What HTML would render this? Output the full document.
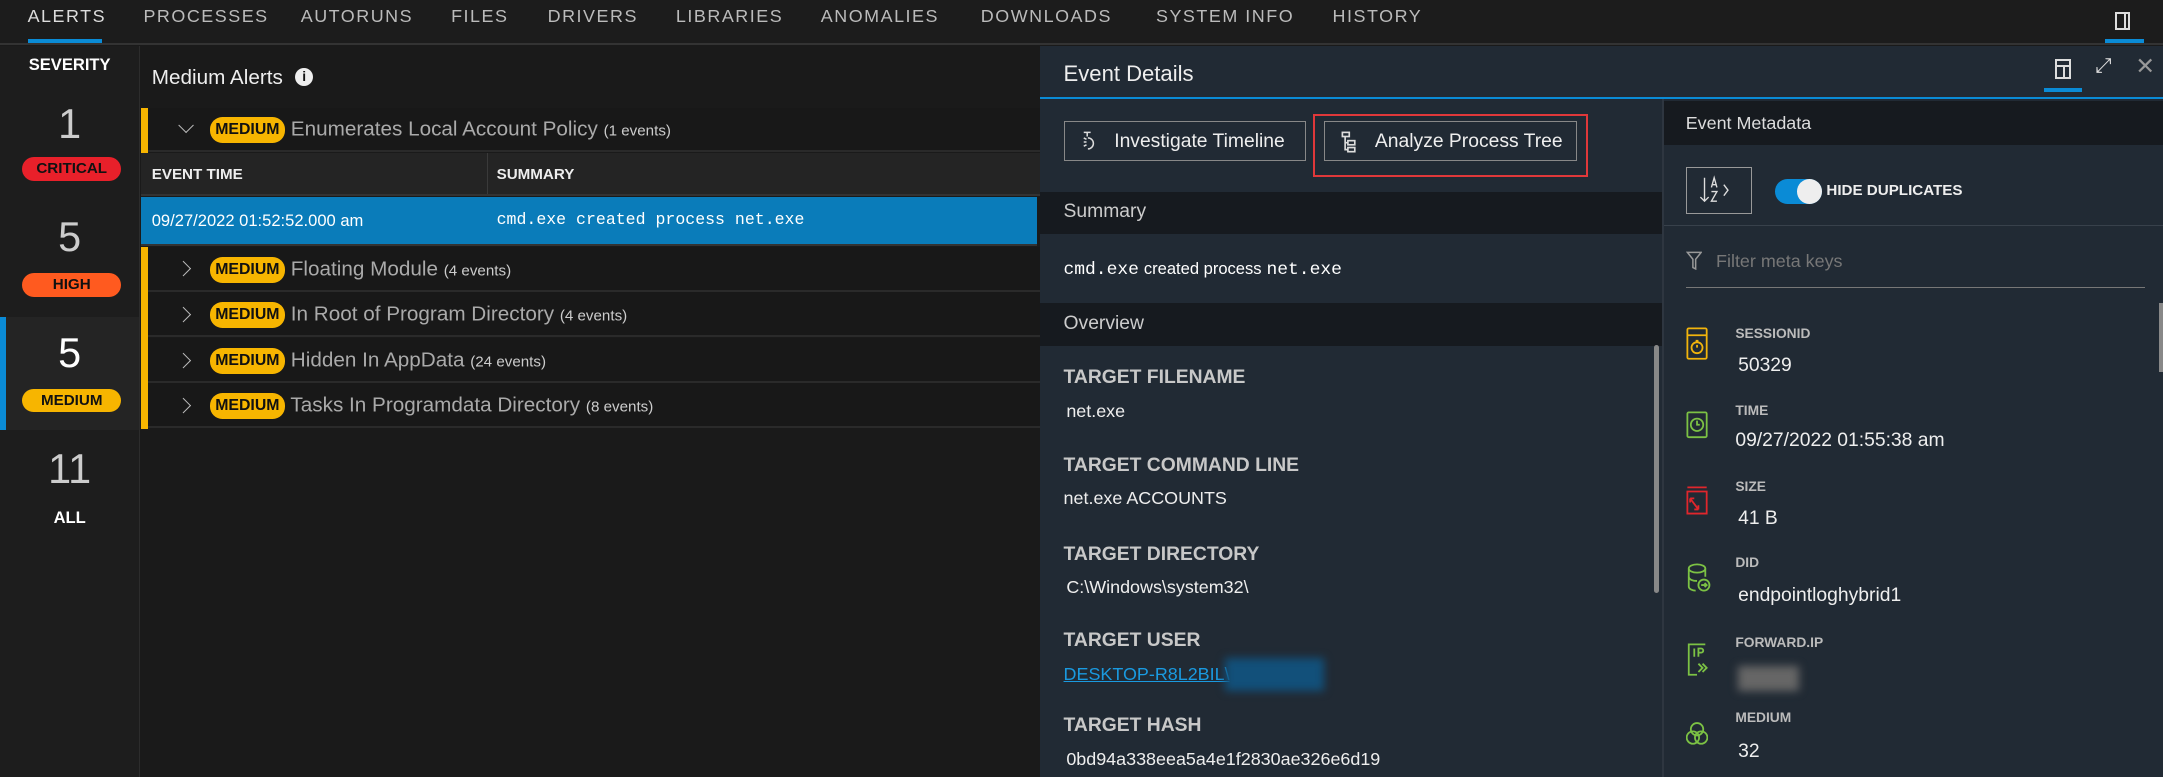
<!DOCTYPE html>
<html><head><meta charset="utf-8"><style>
html,body{margin:0;padding:0;background:#1b1b1b;overflow:hidden}
#w{zoom:1.37946;width:1568px;height:563px;position:relative;font-family:"Liberation Sans",sans-serif;color:#ddd;overflow:hidden;background:#1a1a1a}
.a{position:absolute;white-space:nowrap}
.nav{left:0;top:0;width:1568px;height:31px;background:#1c1c1c;border-bottom:2px solid #333}
.nav span{position:absolute;top:4px;font-size:13px;letter-spacing:1.1px;color:#bbb}
.sev{left:0;top:33px;width:101px;height:530px;background:#1d1d1d;border-right:1px solid #2c2c2c}
.num{font-size:30px;color:#ccc;width:101px;text-align:center;left:0}
.badge{border-radius:9px;font-size:11px;font-weight:bold;text-align:center;height:17px;line-height:17px}
.mb{background:#f7b500;color:#111;border-radius:9px;font-size:11.5px;font-weight:bold;padding:0 4px;height:19px;line-height:19px;display:inline-block;vertical-align:1px}
.row{left:102px;width:652px;height:31px;border-bottom:2px solid #2a2a2a;background:#181818}
.row .bar{position:absolute;left:0;top:0;width:5px;height:33px;background:#f7b500}
.row .chev{position:absolute;left:27px;top:12px;width:7px;height:7px;border-right:1.3px solid #bbb;border-top:1.3px solid #bbb;transform:rotate(45deg)}
.row .chev.d{transform:rotate(135deg);top:9px;left:29px}
.row .t{position:absolute;left:50px;top:7px;font-size:15px;color:#aaa}
.row small{font-size:11px;color:#ccc}
.rp{left:754px;top:33px;width:814px;height:530px;background:#212a34}
.lbl{font-size:14px;font-weight:bold;color:#c8c8c8}
.val{font-size:13px;color:#eee}
.ml{font-size:10px;font-weight:bold;color:#bbb}
.mv{font-size:14px;color:#eee}
.btn{border:1px solid #888;height:29px;line-height:29px;font-size:14px;color:#eee;box-sizing:border-box}
</style></head><body><div id="w">
<div class="a nav">
<span style="left:20px;color:#ddd">ALERTS</span><span style="left:104px">PROCESSES</span><span style="left:218px">AUTORUNS</span><span style="left:327px">FILES</span><span style="left:397px">DRIVERS</span><span style="left:490px">LIBRARIES</span><span style="left:595px">ANOMALIES</span><span style="left:711px">DOWNLOADS</span><span style="left:838px">SYSTEM INFO</span><span style="left:966px">HISTORY</span>
<div class="a" style="left:20px;top:28px;width:54px;height:3px;background:#0a8bd6"></div>
<div class="a" style="left:1533px;top:9px;width:11px;height:13px;border:1.5px solid #ddd;box-sizing:border-box"><div style="position:absolute;left:5px;top:0;width:1.5px;height:10px;background:#ddd"></div></div>
<div class="a" style="left:1526px;top:28px;width:28px;height:3px;background:#0a8bd6"></div>
</div>
<div class="a sev">
<div class="a" style="left:0;top:7px;width:101px;text-align:center;font-size:12px;font-weight:bold;color:#fff">SEVERITY</div>
<div class="a num" style="top:40px">1</div>
<div class="a badge" style="left:16px;top:81px;width:72px;background:#e8202a;color:#111">CRITICAL</div>
<div class="a num" style="top:122px">5</div>
<div class="a badge" style="left:16px;top:165px;width:72px;background:#ff5a1f;color:#111">HIGH</div>
<div class="a" style="left:0;top:197px;width:101px;height:82px;background:#242424"></div>
<div class="a" style="left:0;top:197px;width:4px;height:82px;background:#0a8bd6"></div>
<div class="a num" style="top:206px;color:#fff">5</div>
<div class="a badge" style="left:16px;top:249px;width:72px;background:#f7b500;color:#111">MEDIUM</div>
<div class="a num" style="top:290px">11</div>
<div class="a" style="left:0;top:335px;width:101px;text-align:center;font-size:12px;font-weight:bold;color:#fff">ALL</div>
</div>
<div class="a" style="left:110px;top:48px;font-size:15px;color:#eee">Medium Alerts</div>
<div class="a" style="left:214px;top:49px;width:13px;height:13px;border-radius:50%;background:#eee;color:#111;font-size:10px;font-weight:bold;text-align:center;line-height:13px">i</div>
<div class="a row" style="top:78px"><div class="bar"></div><div class="chev d"></div><div class="t"><span class="mb">MEDIUM</span> Enumerates Local Account Policy <small>(1 events)</small></div></div>
<div class="a" style="left:102px;top:111px;width:652px;height:30px;background:#242424;border-bottom:2px solid #333"></div>
<div class="a" style="left:110px;top:120px;font-size:11px;font-weight:bold;color:#eee">EVENT TIME</div>
<div class="a" style="left:353px;top:111px;width:1px;height:30px;background:#3a3a3a"></div>
<div class="a" style="left:360px;top:120px;font-size:11px;font-weight:bold;color:#eee">SUMMARY</div>
<div class="a" style="left:102px;top:143px;width:650px;height:34px;background:#0a7cba;border-bottom:2px solid #333"></div>
<div class="a" style="left:110px;top:153px;font-size:12px;color:#fff">09/27/2022 01:52:52.000 am</div>
<div class="a" style="left:360px;top:152px;font-size:12px;color:#fff;font-family:'Liberation Mono',monospace">cmd.exe created process net.exe</div>
<div class="a row" style="top:179px"><div class="bar"></div><div class="chev"></div><div class="t"><span class="mb">MEDIUM</span> Floating Module <small>(4 events)</small></div></div>
<div class="a row" style="top:212px"><div class="bar"></div><div class="chev"></div><div class="t"><span class="mb">MEDIUM</span> In Root of Program Directory <small>(4 events)</small></div></div>
<div class="a row" style="top:245px"><div class="bar"></div><div class="chev"></div><div class="t"><span class="mb">MEDIUM</span> Hidden In AppData <small>(24 events)</small></div></div>
<div class="a row" style="top:278px"><div class="bar"></div><div class="chev"></div><div class="t"><span class="mb">MEDIUM</span> Tasks In Programdata Directory <small>(8 events)</small></div></div>
<div class="a rp">
<div class="a" style="left:17px;top:11px;font-size:16px;color:#eee">Event Details</div>
<div class="a" style="left:736px;top:10px;width:11px;height:14px;border:1.5px solid #ddd;box-sizing:border-box"><div style="position:absolute;left:0;top:3px;width:9px;height:1.5px;background:#ddd"></div><div style="position:absolute;left:4px;top:3px;width:1.5px;height:9px;background:#ddd"></div></div>
<div class="a" style="left:728px;top:31px;width:27px;height:3px;background:#0a8bd6"></div>
<div class="a" style="left:765px;top:6px;font-size:15px;color:#ddd">&#x2922;</div>
<div class="a" style="left:794px;top:5px;font-size:17px;color:#999">&#x2715;</div>
<div class="a" style="left:0;top:37px;width:814px;height:1.5px;background:#0a8bd6"></div>
<div class="a" style="left:451px;top:39px;width:1px;height:491px;background:#2e3640"></div>
<div class="a btn" style="left:17px;top:55px;width:176px;padding-left:36px">Investigate Timeline</div>
<svg class="a" style="left:30px;top:62px" width="10" height="16" viewBox="0 0 10 16" fill="none" stroke="#ddd" stroke-width="1.1"><path d="M2 1h5M4.5 1v3M2 5l2 1M2 8h2M2 11l2-1"/><path d="M5 5a4 4 0 0 1 0 8"/></svg>
<div class="a" style="left:198px;top:50px;width:199px;height:45px;border:2px solid #e0383a;box-sizing:border-box"></div>
<div class="a btn" style="left:206px;top:55px;width:183px;padding-left:36px">Analyze Process Tree</div>
<svg class="a" style="left:218px;top:62px" width="12" height="16" viewBox="0 0 12 16" fill="none" stroke="#ddd" stroke-width="1.2"><rect x="1" y="1" width="5" height="3"/><rect x="5" y="7" width="5" height="3"/><rect x="5" y="12" width="5" height="3"/><path d="M3 4v9.5h2M3 8.5h2"/></svg>
<div class="a" style="left:0;top:106px;width:451px;height:31px;background:#161a1f"></div>
<div class="a" style="left:17px;top:113px;font-size:14px;color:#ccc">Summary</div>
<div class="a" style="left:17px;top:154px;font-size:13px;color:#fff"><span style="font-family:'Liberation Mono',monospace">cmd.exe</span> <span style="font-size:12px">created process</span> <span style="font-family:'Liberation Mono',monospace">net.exe</span></div>
<div class="a" style="left:0;top:187px;width:451px;height:31px;background:#161a1f"></div>
<div class="a" style="left:17px;top:194px;font-size:14px;color:#ccc">Overview</div>
<div class="a" style="left:445px;top:217px;width:4px;height:180px;background:#888;border-radius:2px"></div>
<div class="a lbl" style="left:17px;top:233px">TARGET FILENAME</div><div class="a val" style="left:19px;top:258px">net.exe</div>
<div class="a lbl" style="left:17px;top:297px">TARGET COMMAND LINE</div><div class="a val" style="left:17px;top:321px">net.exe ACCOUNTS</div>
<div class="a lbl" style="left:17px;top:361px">TARGET DIRECTORY</div><div class="a val" style="left:19px;top:385px">C:\Windows\system32\</div>
<div class="a lbl" style="left:17px;top:424px">TARGET USER</div><div class="a val" style="left:17px;top:448px;color:#1a9ae0;text-decoration:underline">DESKTOP-R8L2BIL\</div>
<div class="a" style="left:134px;top:444px;width:72px;height:24px;background:#12507a;filter:blur(3px)"></div>
<div class="a lbl" style="left:17px;top:485px">TARGET HASH</div><div class="a val" style="left:19px;top:510px">0bd94a338eea5a4e1f2830ae326e6d19</div>
<div class="a" style="left:452px;top:40px;width:362px;height:32px;background:#161a1f"></div>
<div class="a" style="left:468px;top:49px;font-size:13px;color:#ddd">Event Metadata</div>
<div class="a" style="left:468px;top:88px;width:48px;height:34px;border:1px solid #999;box-sizing:border-box"></div>
<svg class="a" style="left:478px;top:94px" width="30" height="22" viewBox="0 0 30 22" fill="none" stroke="#ddd" stroke-width="1"><path d="M4 2v17M1 16l3 3 3-3"/><path d="M9 9l2-7 2 7M9.5 7h3"/><path d="M9 12h4l-4 7h4"/><path d="M18 7l3 4-3 4"/></svg>
<div class="a" style="left:533px;top:97px;width:34px;height:18px;border-radius:9px;background:#0a8bd6"><div style="position:absolute;right:0;top:0;width:18px;height:18px;border-radius:50%;background:#eee"></div></div>
<div class="a" style="left:570px;top:99px;font-size:11px;font-weight:bold;color:#eee">HIDE DUPLICATES</div>
<div class="a" style="left:452px;top:130px;width:362px;height:1px;background:#38414b"></div>
<svg class="a" style="left:468px;top:149px" width="12" height="14" viewBox="0 0 12 14" fill="none" stroke="#999" stroke-width="1.1"><path d="M1 1h10L7 6v7L5 12V6z"/></svg>
<div class="a" style="left:490px;top:149px;font-size:13px;color:#777">Filter meta keys</div>
<div class="a" style="left:468px;top:175px;width:333px;height:1px;background:#777"></div>
<div class="a" style="left:811px;top:187px;width:3px;height:50px;background:#888"></div>
<div class="a ml" style="left:504px;top:203px">SESSIONID</div><div class="a mv" style="left:506px;top:224px">50329</div>
<svg class="a" style="left:468px;top:204px" width="16" height="24" viewBox="0 0 16 24" fill="none" stroke="#f2b40c" stroke-width="1.3"><rect x="1" y="1" width="14" height="22" rx="1"/><path d="M1 6h14"/><circle cx="8" cy="15" r="4"/><path d="M8 15v-2M7 10h2"/></svg>
<div class="a ml" style="left:504px;top:259px">TIME</div><div class="a mv" style="left:504px;top:279px">09/27/2022 01:55:38 am</div>
<svg class="a" style="left:468px;top:265px" width="16" height="20" viewBox="0 0 16 20" fill="none" stroke="#7cc244" stroke-width="1.3"><rect x="1" y="1" width="14" height="18" rx="1"/><circle cx="8" cy="10" r="4.5"/><path d="M8 7v3h2"/></svg>
<div class="a ml" style="left:504px;top:314px">SIZE</div><div class="a mv" style="left:506px;top:335px">41 B</div>
<svg class="a" style="left:468px;top:319px" width="16" height="22" viewBox="0 0 16 22" fill="none" stroke="#e0262c" stroke-width="1.3"><path d="M1 4h14v16H1zM1 1h14"/><path d="M3 9l6 8M3 9v3M3 9h3M9 17h-3M9 17v-3"/></svg>
<div class="a ml" style="left:504px;top:369px">DID</div><div class="a mv" style="left:506px;top:391px">endpointloghybrid1</div>
<svg class="a" style="left:468px;top:375px" width="18" height="22" viewBox="0 0 18 22" fill="none" stroke="#7cc244" stroke-width="1.3"><ellipse cx="8" cy="4" rx="6" ry="3"/><path d="M2 4v13c0 2 3 3 5 3M14 4v6"/><path d="M2 10c0 2 3 3 6 3"/><circle cx="13" cy="16" r="4"/><path d="M11 16h4M13.5 14.5l1.5 1.5-1.5 1.5"/></svg>
<div class="a ml" style="left:504px;top:427px">FORWARD.IP</div>
<div class="a" style="left:506px;top:450px;width:44px;height:18px;background:#666;filter:blur(3px)"></div>
<svg class="a" style="left:468px;top:433px" width="16" height="24" viewBox="0 0 16 24" fill="none" stroke="#7cc244" stroke-width="1.3"><path d="M14 1H2v22h6"/><path d="M6 4v6M9 10V4h2a1.5 1.5 0 0 1 0 3H9"/><path d="M9 15l3 3-3 3M12 15l3 3-3 3"/></svg>
<div class="a ml" style="left:504px;top:482px">MEDIUM</div><div class="a mv" style="left:506px;top:504px">32</div>
<svg class="a" style="left:468px;top:490px" width="16" height="18" viewBox="0 0 16 18" fill="none" stroke="#7cc244" stroke-width="1.3"><circle cx="8" cy="6" r="4.5"/><circle cx="5" cy="12" r="4.5"/><circle cx="11" cy="12" r="4.5"/></svg>
</div>
</div></body></html>
